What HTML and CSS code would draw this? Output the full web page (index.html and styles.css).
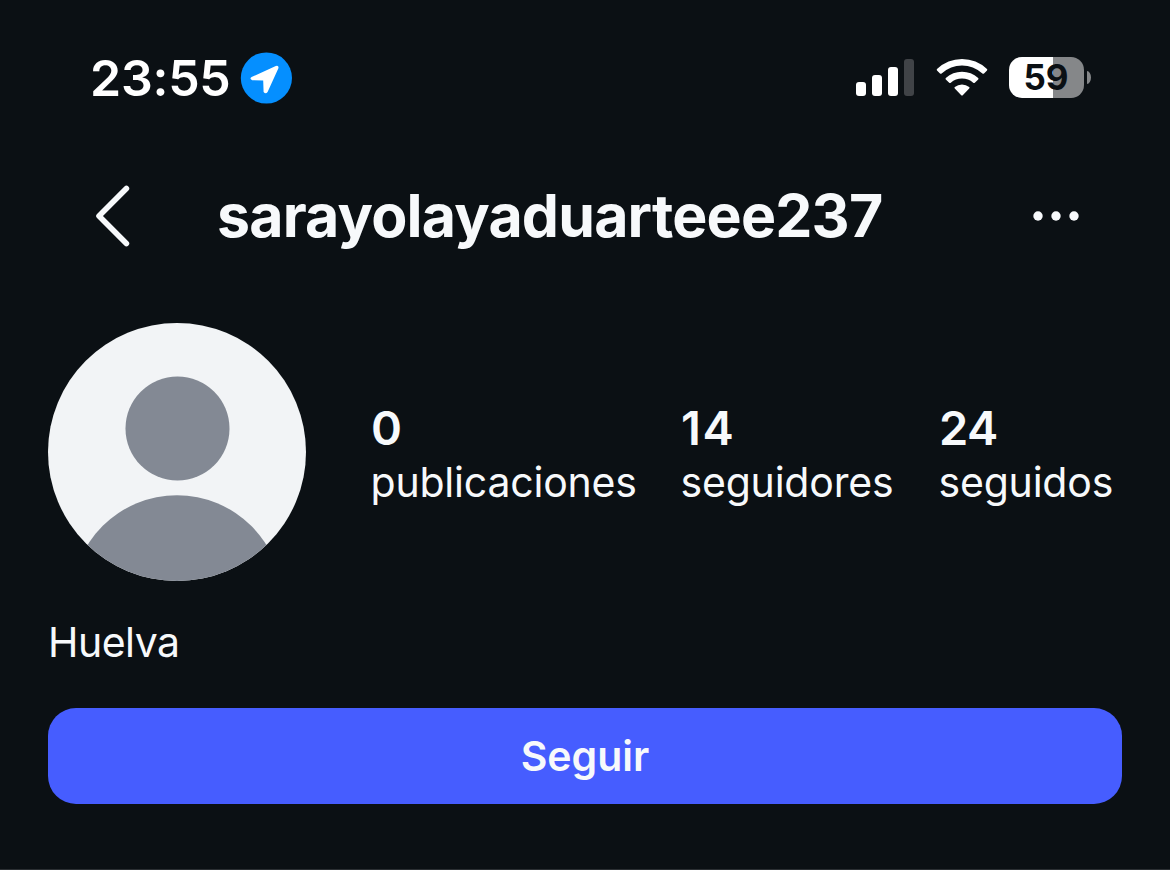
FILE: index.html
```html
<!DOCTYPE html>
<html lang="es">
<head>
<meta charset="utf-8">
<title>sarayolayaduarteee237</title>
<link rel="stylesheet" href="styles.css">
</head>
<body>
<div class="screen">
  <div class="status">
    <span class="time">23:55</span>
    <svg class="location" width="52" height="52" viewBox="0 0 52 52">
      <circle cx="26.4" cy="26" r="25.6" fill="#058fff"/>
      <path d="M11.6 25 L35.8 13.9 Q39 13 38.4 16.2 L27.6 40 Q25.6 42.4 23.6 40 L23.2 28.6 L12.2 28.2 Q9 26.8 11.6 25Z" fill="#fff"/>
    </svg>
    <svg class="signal" width="58" height="38" viewBox="0 0 58 38">
      <rect x="0" y="24" width="10" height="14" rx="3" fill="#fff"/>
      <rect x="16" y="17" width="10" height="21" rx="3" fill="#fff"/>
      <rect x="32" y="9" width="10" height="29" rx="3" fill="#fff"/>
      <rect x="48" y="1" width="10" height="37" rx="3" fill="#404347"/>
    </svg>
    <svg class="wifi" width="52" height="38" viewBox="0 0 52 38">
      <path d="M1 11 Q11.6 1 26 1 T51 11 Q51.6 11.7 51 12.4 L48 15.4 Q47.2 16 46.4 15.4 Q37.4 7.4 26 7.4 T5.6 15.4 Q4.8 16 4 15.4 L1 12.4 Q.4 11.7 1 11Z" fill="#fff"/>
      <path d="M9.8 20 Q16.8 13.8 26 13.8 T42.2 20 Q42.8 20.7 42.2 21.4 L38.8 24.8 Q38 25.4 37.2 24.8 Q32.4 20.6 26 20.6 T14.8 24.8 Q14 25.4 13.2 24.8 L9.8 21.4 Q9.2 20.7 9.8 20Z" fill="#fff"/>
      <path d="M18.8 29 Q22 26.4 26 26.4 T33.2 29 Q34 29.7 33.2 30.5 L27 37 Q26 38 25 37 L18.8 30.5 Q18 29.7 18.8 29Z" fill="#fff"/>
    </svg>
    <div class="battery">59</div>
    <div class="nub"></div>
  </div>

  <div class="nav">
    <svg class="back" width="36" height="62" viewBox="0 0 36 62">
      <path d="M31.4 3.5 L4 31 L31.4 58.5" fill="none" stroke="#f7f9fb" stroke-width="5.6" stroke-linecap="round" stroke-linejoin="round"/>
    </svg>
    <h1 class="username">sarayolayaduarteee237</h1>
    <svg class="more" width="46" height="10" viewBox="0 0 46 10">
      <circle cx="5" cy="5" r="4.7"/><circle cx="23" cy="5" r="4.7"/><circle cx="41" cy="5" r="4.7"/>
    </svg>
  </div>

  <div class="profile">
    <svg class="avatar" width="258" height="258" viewBox="0 0 258 258">
      <clipPath id="round"><circle cx="129" cy="129" r="129"/></clipPath>
      <g clip-path="url(#round)">
        <rect width="258" height="258" fill="#f2f4f6"/>
        <circle cx="129.5" cy="105.5" r="52" fill="#838994"/>
        <circle cx="129" cy="277.5" r="105.3" fill="#838994"/>
      </g>
    </svg>
    <div class="stats">
      <div class="stat"><b>0</b><span>publicaciones</span></div>
      <div class="stat"><b class="wide">14</b><span>seguidores</span></div>
      <div class="stat"><b>24</b><span>seguidos</span></div>
    </div>
  </div>

  <p class="bio">Huelva</p>
  <button class="follow">Seguir</button>
</div>
</body>
</html>
```
FILE: styles.css
```css
* { box-sizing: border-box; }
body { margin: 0; background: #0b1014; }
.screen {
  width: 1170px;
  height: 870px;
  padding: 48px 48px 0;
  display: flex;
  flex-direction: column;
  background: #0b1014;
  border-bottom: 1px solid #2b2f33;
  color: #f7f9fb;
  font-family: Inter, "Liberation Sans", sans-serif;
  overflow: hidden;
}
svg { display: block; flex: none; }

.status { height: 60px; display: flex; align-items: center; padding-left: 42px; color: #fff; }
.time { width: 150px; font-size: 50px; font-weight: 600; line-height: 60px; letter-spacing: -0.25px; white-space: nowrap; }
.signal { margin: 0 0 2px 564px; }
.wifi { margin: 0 0 2px 21.5px; }
.battery {
  width: 75px;
  height: 41px;
  margin: 0 0 1px 21.5px;
  border-radius: 13px;
  background: linear-gradient(90deg, #fff 44px, #858789 44px);
  color: #0b1014;
  font-size: 35px;
  font-weight: 700;
  line-height: 41px;
  text-align: center;
  text-indent: -1px;
}
.nub { width: 4px; height: 13px; margin: 0 0 1px 3px; border-radius: 0 4px 4px 0 / 0 6.5px 6.5px 0; background: #858789; }

.nav { height: 80px; margin-top: 68px; display: flex; align-items: center; padding-left: 47px; }
.username { margin: 0 0 0 86px; width: 729px; font-size: 59px; font-weight: 700; line-height: 80px; letter-spacing: -0.8px; white-space: nowrap; }
.more { margin-left: 87px; fill: #f7f9fb; }

.profile { margin-top: 67px; height: 258px; display: flex; align-items: center; }
.stats { margin: 6px 0 0 65px; display: grid; grid-template-columns: 310px 258px 183px; }
.stat { display: flex; flex-direction: column; line-height: 54px; white-space: nowrap; }
.stat b { font-size: 47px; font-weight: 600; letter-spacing: -0.6px; }
.stat .wide { letter-spacing: 1.6px; }
.stat span { margin-left: -0.5px; font-size: 41px; letter-spacing: -0.2px; }

.bio { margin: 34px 0 0; font-size: 41px; line-height: 54px; letter-spacing: -0.5px; }
.follow {
  margin-top: 39px;
  height: 96px;
  padding: 0;
  border: 0;
  border-radius: 28px;
  background: #465dff;
  color: #f7f9fb;
  font: 600 41px/96px Inter, "Liberation Sans", sans-serif;
}
```
